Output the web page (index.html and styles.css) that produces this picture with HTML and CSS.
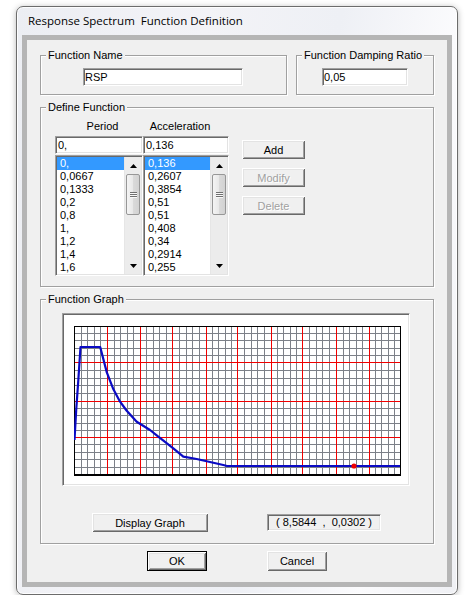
FILE: index.html
```html
<!DOCTYPE html>
<html>
<head>
<meta charset="utf-8">
<title>Response Spectrum Function Definition</title>
<link rel="stylesheet" href="styles.css">
</head>
<body>
<div class="window">
  <div class="titlebar">Response Spectrum  Function Definition</div>
  <div class="frame">
    <div class="client">
      <div class="row1">
        <fieldset class="group g-name">
          <legend>Function Name</legend>
          <div class="gbody name-body">
            <div class="field name-field">RSP</div>
          </div>
        </fieldset>
        <fieldset class="group g-damp">
          <legend>Function Damping Ratio</legend>
          <div class="gbody damp-body">
            <div class="field damp-field">0,05</div>
          </div>
        </fieldset>
      </div>

      <fieldset class="group g-def">
        <legend>Define Function</legend>
        <div class="gbody def-body">
          <div class="col col1">
            <div class="colhead head1">Period</div>
            <div class="field cell">0,</div>
            <div class="list">
              <div class="items">
                <div class="item sel">0,</div>
                <div class="item">0,0667</div>
                <div class="item">0,1333</div>
                <div class="item">0,2</div>
                <div class="item">0,8</div>
                <div class="item">1,</div>
                <div class="item">1,2</div>
                <div class="item">1,4</div>
                <div class="item">1,6</div>
              </div>
              <div class="sb">
                <div class="sb-btn"><svg width="7" height="4" viewBox="0 0 7 4"><polygon points="0,4 3.5,0 7,4" fill="#000"/></svg></div>
                <div class="thumb"><span class="grip"></span><span class="grip"></span><span class="grip"></span></div>
                <div class="track"></div>
                <div class="sb-btn"><svg width="7" height="4" viewBox="0 0 7 4"><polygon points="0,0 7,0 3.5,4" fill="#000"/></svg></div>
              </div>
            </div>
          </div>
          <div class="col col2">
            <div class="colhead head2">Acceleration</div>
            <div class="field cell">0,136</div>
            <div class="list">
              <div class="items">
                <div class="item sel">0,136</div>
                <div class="item">0,2607</div>
                <div class="item">0,3854</div>
                <div class="item">0,51</div>
                <div class="item">0,51</div>
                <div class="item">0,408</div>
                <div class="item">0,34</div>
                <div class="item">0,2914</div>
                <div class="item">0,255</div>
              </div>
              <div class="sb">
                <div class="sb-btn"><svg width="7" height="4" viewBox="0 0 7 4"><polygon points="0,4 3.5,0 7,4" fill="#000"/></svg></div>
                <div class="thumb"><span class="grip"></span><span class="grip"></span><span class="grip"></span></div>
                <div class="track"></div>
                <div class="sb-btn"><svg width="7" height="4" viewBox="0 0 7 4"><polygon points="0,0 7,0 3.5,4" fill="#000"/></svg></div>
              </div>
            </div>
          </div>
          <div class="btncol">
            <button class="btn side-btn">Add</button>
            <button class="btn side-btn" disabled>Modify</button>
            <button class="btn side-btn" disabled>Delete</button>
          </div>
        </div>
      </fieldset>

      <fieldset class="group g-graph">
        <legend>Function Graph</legend>
        <div class="gbody graph-body">
          <div class="panel">
            <svg class="grid" width="327" height="150" viewBox="0 0 327 150">
              <path class="minor" d="M7.5 0v149M13.5 0v149M20.5 0v149M26.5 0v149M40.5 0v149M46.5 0v149M53.5 0v149M59.5 0v149M72.5 0v149M79.5 0v149M85.5 0v149M92.5 0v149M105.5 0v149M112.5 0v149M118.5 0v149M125.5 0v149M138.5 0v149M144.5 0v149M151.5 0v149M157.5 0v149M170.5 0v149M177.5 0v149M183.5 0v149M190.5 0v149M203.5 0v149M209.5 0v149M216.5 0v149M222.5 0v149M235.5 0v149M242.5 0v149M248.5 0v149M255.5 0v149M269.5 0v149M275.5 0v149M282.5 0v149M288.5 0v149M301.5 0v149M307.5 0v149M314.5 0v149M320.5 0v149M0 7.5h327M0 14.5h327M0 22.5h327M0 29.5h327M0 44.5h327M0 52.5h327M0 59.5h327M0 67.5h327M0 82.5h327M0 89.5h327M0 97.5h327M0 104.5h327M0 118.5h327M0 126.5h327M0 133.5h327M0 141.5h327"/>
              <path class="major" d="M33.5 0v149M66.5 0v149M98.5 0v149M132.5 0v149M163.5 0v149M197.5 0v149M228.5 0v149M262.5 0v149M295.5 0v149M0 36.5h327M0 75.5h327M0 111.5h327"/>
              <path class="frameline" d="M0.5 0.5H326.5V148.5H0.5ZM0 149.5h327"/>
              <polyline class="curve" points="0.5,114 2.2,84 4.4,53 6.5,21 26.2,21 32.8,46.4 39.4,63.3 45.9,75.4 52.5,84.5 62.7,95.7 76,104 84.3,110.7 99.3,122.3 109.3,130.7 122.7,133 149.3,139 153,140 326,140"/>
              <circle class="cursor" cx="280" cy="140" r="2.6"/>
            </svg>
          </div>
          <div class="display-row">
            <button class="btn display-btn">Display Graph</button>
            <div class="readout">( 8,5844  ,  0,0302 )</div>
          </div>
        </div>
      </fieldset>

      <div class="bottom-row">
        <button class="btn ok-btn">OK</button>
        <button class="btn cancel-btn">Cancel</button>
      </div>
    </div>
  </div>
</div>
</body>
</html>
```
FILE: styles.css
```css
* { box-sizing: border-box; }
html, body { margin: 0; padding: 0; background: #ffffff; }
body {
  font-family: "Liberation Sans", Arial, sans-serif;
  font-size: 11px;
  color: #000;
}

.window {
  margin: 6px 0 0 16px;
  width: 442px;
  height: 589px;
  border: 1px solid #6c6c6c;
  border-radius: 7px;
  padding: 0 5px 7px 5px;
  background: linear-gradient(100deg, #eceef3 0%, #f3f3f7 35%, #eef0f5 60%, #fbfbfd 82%, #eff0f4 100%);
  box-shadow: 0 1px 6px rgba(0, 0, 0, 0.28), inset 0 0 0 1px rgba(255, 255, 255, 0.85);
}

.titlebar {
  height: 28px;
  line-height: 28px;
  padding-left: 6px;
  font-family: "Open Sans", "Noto Sans", sans-serif;
  font-size: 11.5px;
  color: #000;
  white-space: pre;
}

.frame {
  border: 5px solid #b5b5b5;
}

.client {
  background: #f0f0f0;
  padding: 9px 13px 11px 13px;
  height: 542px;
}

/* group boxes */
.group {
  margin: 0;
  padding: 0;
  min-width: 0;
  border: 1px solid #a0a0a0;
  box-shadow: inset 1px 1px 0 #ffffff, 1px 1px 0 #ffffff;
}
.group legend {
  margin-left: 5px;
  padding: 0 2px;
  height: 13px;
  line-height: 13px;
  white-space: nowrap;
  background: #f0f0f0;
}

.row1 { display: flex; gap: 9px; }
.g-name { width: 247px; }
.g-damp { width: 138px; }
.name-body { padding: 6px 0 8px 42px; }
.damp-body { padding: 6px 0 8px 25px; }

/* sunken edit fields */
.field {
  height: 18px;
  line-height: 16px;
  padding-left: 1px;
  background: #ffffff;
  border: 1px solid;
  border-color: #a0a0a0 #ffffff #ffffff #a0a0a0;
  box-shadow: inset 1px 1px 0 #696969, inset -1px -1px 0 #e3e3e3;
  white-space: pre;
}
.name-field { width: 160px; }
.damp-field { width: 86px; }

/* define function */
.g-def { width: 394px; margin-top: 6px; }
.def-body { display: flex; padding: 6px 0 10px 14px; }
.col1 { width: 88px; }
.col2 { width: 86px; }
.colhead { height: 13px; line-height: 13px; text-align: center; margin-bottom: 3px; }
.head1 { padding-left: 7px; }
.head2 { padding-right: 12px; }
.cell { margin-bottom: 1px; padding-left: 2px; }

.list {
  height: 121px;
  display: flex;
  padding: 1px;
  background: #ffffff;
  border: 1px solid;
  border-color: #a0a0a0 #ffffff #ffffff #a0a0a0;
  box-shadow: inset 1px 1px 0 #696969, inset -1px -1px 0 #e3e3e3;
}
.items { flex: 1; min-width: 0; }
.item { height: 13px; line-height: 13px; padding-left: 3px; white-space: nowrap; }
.item.sel { background: #3399ff; color: #ffffff; }

.sb {
  width: 17px;
  display: flex;
  flex-direction: column;
  background: #ececec;
  border-left: 1px solid #e6e6e6;
}
.sb-btn { height: 17px; display: flex; align-items: center; justify-content: center; }
.sb-btn svg { display: block; }
.thumb {
  height: 41px;
  margin: 0 1px;
  border: 1px solid #979797;
  border-radius: 2px;
  background: linear-gradient(to right, #f4f4f4 0%, #e8e8e8 50%, #dadada 51%, #d2d2d2 100%);
  display: flex;
  flex-direction: column;
  align-items: center;
  justify-content: center;
  gap: 1px;
}
.grip { display: block; width: 7px; height: 1px; background: #707070; box-shadow: 0 1px 0 #f8f8f8; }
.track { flex: 1; }

.btncol { display: flex; flex-direction: column; gap: 9px; margin-left: 13px; margin-top: 20px; }

/* classic buttons */
.btn {
  font-family: "Liberation Sans", Arial, sans-serif;
  font-size: 11px;
  font-weight: normal;
  color: #000;
  background: #f0f0f0;
  border: none;
  padding: 0;
  margin: 0;
  box-shadow: inset 1px 1px 0 #ffffff, inset -1px -1px 0 #696969, inset 2px 2px 0 #e3e3e3, inset -2px -2px 0 #a0a0a0;
}
.btn:disabled { color: #a0a0a0; text-shadow: 1px 1px 0 #ffffff; }
.side-btn { width: 63px; height: 19px; }

/* graph */
.g-graph { width: 394px; margin-top: 6px; }
.graph-body { padding: 7px 0 11px 21px; }
.panel {
  width: 348px;
  height: 173px;
  padding: 12px 0 0 11px;
  background: #ffffff;
  border: 1px solid;
  border-color: #a0a0a0 #ffffff #ffffff #a0a0a0;
  box-shadow: inset 1px 1px 0 #696969, inset -1px -1px 0 #e3e3e3;
}
.grid { display: block; }
.grid .minor { stroke: #7c8088; stroke-width: 1; fill: none; shape-rendering: crispEdges; }
.grid .major { stroke: #f00000; stroke-width: 1; fill: none; shape-rendering: crispEdges; }
.grid .frameline { stroke: #000; stroke-width: 1; fill: none; shape-rendering: crispEdges; }
.grid .curve { stroke: #0a0ac4; stroke-width: 2.2; fill: none; stroke-linejoin: round; }
.grid .cursor { fill: #ee0000; }

.display-row { display: flex; align-items: center; margin-top: 27px; padding-left: 30px; }
.display-btn { width: 116px; height: 19px; }
.readout {
  width: 114px;
  height: 17px;
  margin-left: 59px;
  line-height: 15px;
  text-align: center;
  white-space: pre;
  border: 1px solid;
  border-color: #a0a0a0 #ffffff #ffffff #a0a0a0;
  box-shadow: inset 1px 1px 0 #696969, inset -1px -1px 0 #e3e3e3;
}

.bottom-row { display: flex; justify-content: center; gap: 60px; margin-top: 7px; }
.ok-btn, .cancel-btn { width: 60px; height: 20px; }
.ok-btn {
  border: 1px solid #000;
  box-shadow: inset 1px 1px 0 #ffffff, inset -1px -1px 0 #696969, inset 2px 2px 0 #e3e3e3, inset -2px -2px 0 #a0a0a0;
}
```
